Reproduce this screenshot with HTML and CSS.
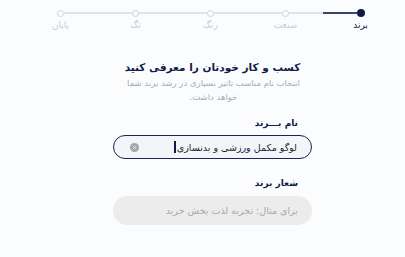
FILE: index.html
```html
<!DOCTYPE html>
<html lang="fa" dir="rtl">
<head>
<meta charset="utf-8">
<link rel="stylesheet" href="styles.css">
</head>
<body>
<div class="stepper">
  <div class="step active">
    <div class="track"><span class="seg none"></span><span class="dot"></span><span class="seg dark"></span></div>
    <div class="label">برند</div>
  </div>
  <div class="step">
    <div class="track"><span class="seg"></span><span class="dot"></span><span class="seg"></span></div>
    <div class="label">صنعت</div>
  </div>
  <div class="step">
    <div class="track"><span class="seg"></span><span class="dot"></span><span class="seg"></span></div>
    <div class="label">رنگ</div>
  </div>
  <div class="step">
    <div class="track"><span class="seg"></span><span class="dot"></span><span class="seg"></span></div>
    <div class="label">تگ</div>
  </div>
  <div class="step">
    <div class="track"><span class="seg"></span><span class="dot"></span><span class="seg none"></span></div>
    <div class="label">پایان</div>
  </div>
</div>
<main class="main">
  <div class="card">
    <h1 class="title">کسب و کار خودتان را معرفی کنید</h1>
    <p class="sub">انتخاب نام مناسب تاثیر بسیاری در رشد برند شما خواهد داشت.</p>
    <div class="field">
      <div class="flabel">نام بـــرند</div>
      <div class="input active">
        <span class="value">لوگو مکمل ورزشی و بدنسازی</span><span class="caret"></span>
        <span class="spacer"></span>
        <svg class="clear" width="9" height="9" viewBox="0 0 9 9"><circle cx="4.5" cy="4.5" r="4.5" fill="#a3a6ab"/><path d="M3 3 L6 6 M6 3 L3 6" stroke="#e4e5e7" stroke-width="1" stroke-linecap="round"/></svg>
      </div>
    </div>
    <div class="field second">
      <div class="flabel">شعار برند</div>
      <div class="input muted">
        <span class="placeholder">برای مثال: تجربه لذت بخش خرید</span>
      </div>
    </div>
  </div>
</main>
</body>
</html>
```

FILE: styles.css
```css
* { box-sizing: border-box; }
html, body { margin: 0; padding: 0; }
body {
  background: #fbfcfe;
  font-family: "DejaVu Sans", sans-serif;
  color: #0f1b45;
  width: 405px;
  height: 257px;
  overflow: hidden;
}
.stepper {
  display: flex;
  padding: 9px 7px 0 23px;
}
.step {
  width: 75px;
  display: flex;
  flex-direction: column;
  align-items: center;
}
.track {
  width: 100%;
  height: 8px;
  display: flex;
  align-items: center;
}
.seg {
  flex: 1;
  height: 1.5px;
  background: #e1e3e8;
}
.seg.none { background: transparent; }
.seg.dark { background: #3a4466; }
.dot {
  width: 7px;
  height: 7px;
  border-radius: 50%;
  border: 1px solid #cfd2d8;
  background: #fbfcfe;
  flex: none;
}
.step.active .dot {
  width: 8px;
  height: 8px;
  border: none;
  background: #0f1b45;
}
.label {
  font-size: 9px;
  line-height: 12px;
  margin-top: 2px;
  color: #c9ccd2;
}
.step.active .label { color: #0f1b45; }
.main {
  display: flex;
  justify-content: center;
  padding-left: 20px;
}
.card {
  width: 199px;
  padding-top: 28px;
}
.title {
  margin: 0;
  font-size: 10.5px;
  font-weight: bold;
  text-align: center;
  line-height: 16px;
  color: #0f1b45;
}
.sub {
  margin: 1px 0 0;
  font-size: 8.5px;
  line-height: 14px;
  text-align: center;
  color: #a7abb3;
  padding: 0 12px 0 14px;
}
.field { margin-top: 13px; }
.field.second { margin-top: 18px; }
.flabel {
  font-size: 9px;
  font-weight: bold;
  line-height: 12px;
  padding-right: 14px;
  color: #0f1b45;
}
.input {
  margin-top: 6px;
  display: flex;
  align-items: center;
  border-radius: 15px;
  padding: 0 14px 0 16px;
  font-size: 9.5px;
}
.input.active {
  height: 24px;
  border: 1.5px solid #1b2650;
  background: #f4f5f8;
}
.input.muted {
  height: 29px;
  background: #ececed;
  margin-top: 7px;
}
.value { color: #1a1f36; white-space: nowrap; }
.caret {
  width: 2px;
  height: 12px;
  background: #0f1b45;
  margin-right: 1px;
}
.spacer { flex: 1; }
.clear { flex: none; }
.placeholder { color: #a6a9ae; white-space: nowrap; }
```
